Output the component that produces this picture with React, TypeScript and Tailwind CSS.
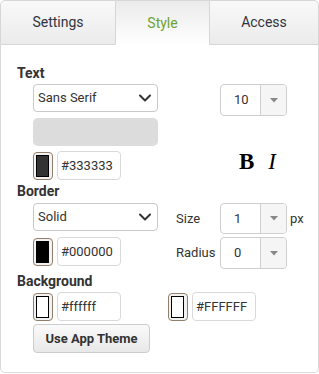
import React from "react";

function Chevron() {
  return (
    <svg width="12" height="8" viewBox="0 0 12 8" className="shrink-0">
      <path d="M1 1.5 L6 6.5 L11 1.5" fill="none" stroke="#333" strokeWidth="2" strokeLinecap="round" strokeLinejoin="round" />
    </svg>
  );
}

function Select({ value }: { value: string }) {
  return (
    <div className="h-[28px] w-[125px] border border-[#c9c9c9] rounded-[4px] bg-white flex items-center pl-[4px] pr-[6px] justify-between text-[13px]">
      <span>{value}</span>
      <Chevron />
    </div>
  );
}

function Swatch({ fill }: { fill: string }) {
  return (
    <div className="w-[20px] h-[28px] border border-[#917e6b] rounded-[4px] bg-[#f2f2f2] pl-[2px] pr-[3px] py-[2px] shrink-0">
      <div className="w-full h-full border-[1.5px] border-black" style={{ background: fill }} />
    </div>
  );
}

function ColorField({ fill, value }: { fill: string; value: string }) {
  return (
    <div className="flex items-center gap-[4px] h-[29px]">
      <Swatch fill={fill} />
      <div className="w-[64px] h-[29px] border border-[#d9d9d9] rounded-[4px] bg-white flex items-center pl-[3px] text-[13px]">
        {value}
      </div>
    </div>
  );
}

function NumBox({ value, h }: { value: string; h: string }) {
  return (
    <div className={`w-[67px] ${h} border border-[#cfcfcf] rounded-[4px] flex overflow-hidden bg-white`}>
      <div className="flex-1 flex items-center pl-[13px] text-[13px]">{value}</div>
      <div className="w-[26px] border-l border-[#cfcfcf] bg-[#f5f5f5] flex items-center justify-center">
        <svg width="8" height="5" viewBox="0 0 8 5">
          <path d="M0 0 L8 0 L4 4.5 Z" fill="#888" />
        </svg>
      </div>
    </div>
  );
}

export default function App() {
  return (
    <div className="w-[319px] h-[374px] bg-white font-['Roboto',sans-serif] text-[#333]">
      <div className="flex h-[45px]">
        <div className="w-[116px] border border-[#d6d6d6] rounded-tl-[5px] bg-gradient-to-b from-[#f9f9f9] to-[#ebebeb] flex items-center justify-center text-[14px] text-[#2f3440]">
          Settings
        </div>
        <div className="w-[93px] border-t border-[#d6d6d6] bg-gradient-to-b from-[#ebebeb] to-white flex items-center justify-center text-[14px] text-[#6ea331]">
          Style
        </div>
        <div className="flex-1 border border-[#d6d6d6] rounded-tr-[5px] bg-gradient-to-b from-[#f9f9f9] to-[#ebebeb] flex items-center justify-center text-[14px] text-[#2f3440]">
          Access
        </div>
      </div>
      <div className="h-[328px] border-x border-b border-[#d9d9d9] rounded-b-[5px] pl-[16px] pt-[19px]">
        <div className="h-[18px] leading-[18px] text-[14px] font-bold">Text</div>
        <div className="flex mt-[2px] pl-[16px]">
          <div className="flex flex-col w-[125px]">
            <Select value="Sans Serif" />
            <div className="mt-[6px] h-[28px] rounded-[5px] bg-[#dcdcdc]" />
            <div className="mt-[5px]">
              <ColorField fill="#333333" value="#333333" />
            </div>
          </div>
          <div className="flex flex-col ml-[62px]">
            <NumBox value="10" h="h-[32px]" />
            <div className="flex mt-[34px] ml-[19px] gap-[14px] h-[23px] leading-[23px] text-[23px] font-['Liberation_Serif',serif] text-black">
              <span className="font-bold">B</span>
              <span className="italic">I</span>
            </div>
          </div>
        </div>

        <div className="mt-[2px] h-[18px] leading-[18px] text-[14px] font-bold">Border</div>
        <div className="flex mt-[3px] pl-[16px]">
          <div className="flex flex-col w-[125px]">
            <Select value="Solid" />
            <div className="mt-[6px]">
              <ColorField fill="#000000" value="#000000" />
            </div>
          </div>
          <div className="flex flex-col ml-[18px] text-[13px]">
            <div className="flex items-center">
              <span className="w-[44px]">Size</span>
              <NumBox value="1" h="h-[31px]" />
              <span className="ml-[3px]">px</span>
            </div>
            <div className="flex items-center mt-[3px]">
              <span className="w-[44px]">Radius</span>
              <NumBox value="0" h="h-[32px]" />
            </div>
          </div>
        </div>

        <div className="mt-[3px] h-[18px] leading-[18px] text-[14px] font-bold">Background</div>
        <div className="flex mt-[2px] pl-[16px]">
          <ColorField fill="#ffffff" value="#ffffff" />
          <div className="ml-[47px]">
            <ColorField fill="#ffffff" value="#FFFFFF" />
          </div>
        </div>
        <div className="mt-[3px] ml-[16px] w-[117px] h-[29px] border border-[#cccccc] rounded-[4px] bg-gradient-to-b from-[#fafafa] to-[#e8e8e8] flex items-center justify-center text-[13px] font-bold">
          Use App Theme
        </div>
      </div>
    </div>
  );
}
